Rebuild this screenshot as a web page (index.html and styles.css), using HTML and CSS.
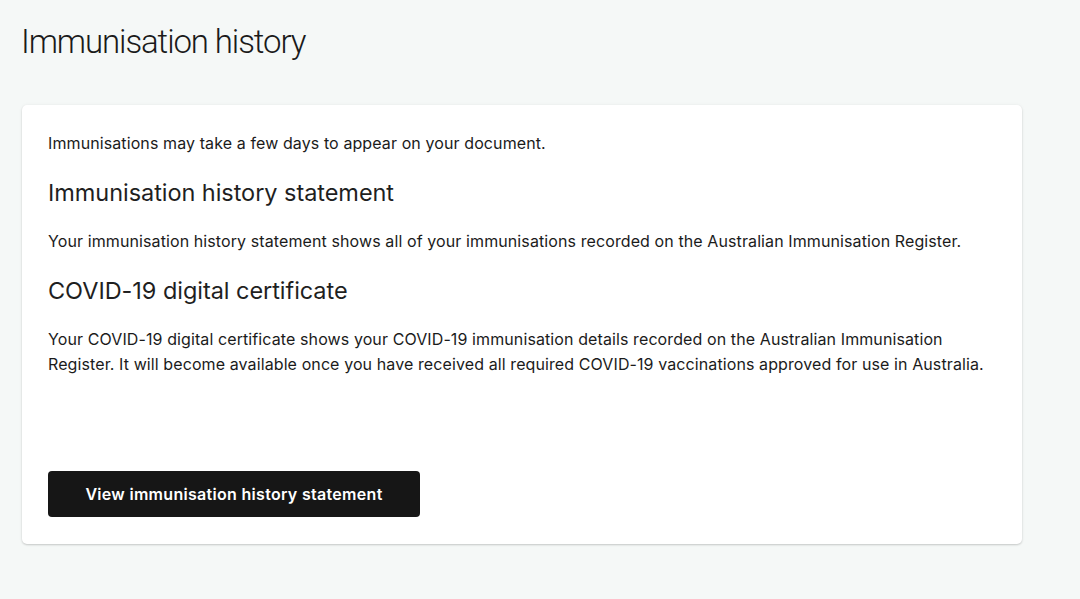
FILE: index.html
```html
<!DOCTYPE html>
<html lang="en">
<head>
<meta charset="utf-8">
<title>Immunisation history</title>
<link rel="stylesheet" href="styles.css">
</head>
<body>
<main class="page">
  <h1 class="page-title">Immunisation history</h1>
  <section class="card">
    <p class="text">Immunisations may take a few days to appear on your document.</p>
    <h2 class="heading">Immunisation history statement</h2>
    <p class="text">Your immunisation history statement shows all of your immunisations recorded on the Australian Immunisation Register.</p>
    <h2 class="heading">COVID-19 digital certificate</h2>
    <p class="text">Your COVID-19 digital certificate shows your COVID-19 immunisation details recorded on the Australian Immunisation Register. It will become available once you have received all required COVID-19 vaccinations approved for use in Australia.</p>
    <div class="actions">
      <button class="btn" type="button">View immunisation history statement</button>
    </div>
  </section>
</main>
</body>
</html>
```

FILE: styles.css
```css
html, body {
  margin: 0;
  padding: 0;
  background: #f5f8f7;
}
body {
  font-family: Inter, "Noto Sans", sans-serif;
  color: #1b1b1b;
}
.page {
  padding: 20px 58px 40px 22px;
}
.page-title {
  margin: 0 0 0 -1px;
  font-family: Roboto, "Liberation Sans", sans-serif;
  font-weight: 300;
  font-size: 33px;
  line-height: 44px;
  letter-spacing: -1.1px;
  color: #1a1a1a;
}
.card {
  margin-top: 41px;
  background: #fff;
  border-radius: 5px;
  box-shadow: 0 1px 2px rgba(0,0,0,0.18), 0 0 4px rgba(0,0,0,0.04);
  padding: 26px 26px 27px 26px;
  width: 948px;
}
.text {
  margin: 0;
  font-size: 16px;
  line-height: 25px;
  letter-spacing: 0.1px;
  color: #1b1b1b;
}
.heading {
  margin: 20px 0 19px;
  font-size: 23.5px;
  font-weight: 400;
  line-height: 34px;
  letter-spacing: -0.05px;
  color: #1f1f1f;
}
.actions {
  margin-top: 94px;
}
.btn {
  display: block;
  font-family: Inter, "Noto Sans", sans-serif;
  font-size: 16px;
  font-weight: 600;
  letter-spacing: 0.3px;
  color: #fff;
  background: #161616;
  border: none;
  border-radius: 4px;
  height: 46px;
  width: 372px;
  padding: 0;
  cursor: pointer;
}
```
